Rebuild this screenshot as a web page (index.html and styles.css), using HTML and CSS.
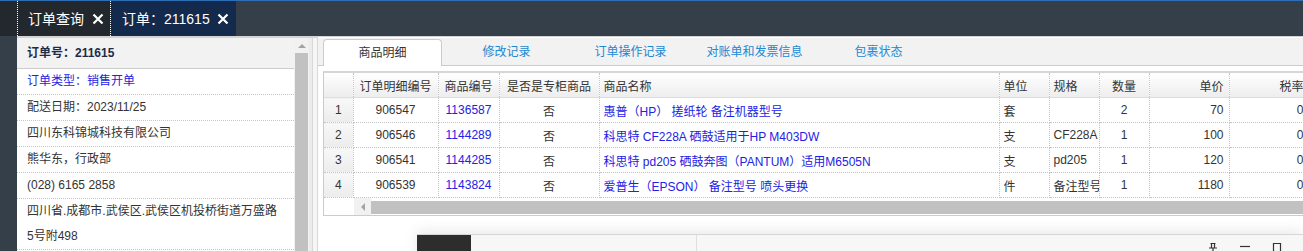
FILE: index.html
```html
<!DOCTYPE html>
<html lang="zh-CN">
<head>
    <meta charset="UTF-8">
    <title>订单：211615</title>
    <link rel="stylesheet" href="styles.css">
</head>
<body>
    <div class="topbar">
        <div class="lead"></div>
        <div class="tab tab-list">
            <span>订单查询</span>
            <svg class="close" width="12" height="12" viewBox="0 0 12 12"><path d="M1.5 1.5L10.5 10.5M10.5 1.5L1.5 10.5"/></svg>
        </div>
        <div class="tab tab-order">
            <span>订单：211615</span>
            <svg class="close" width="12" height="12" viewBox="0 0 12 12"><path d="M1.5 1.5L10.5 10.5M10.5 1.5L1.5 10.5"/></svg>
        </div>
    </div>

    <div class="main">
        <div class="side">
            <div class="side-body">
                <div class="side-head">订单号：211615</div>
                <div class="side-row link">订单类型：销售开单</div>
                <div class="side-row">配送日期：2023/11/25</div>
                <div class="side-row">四川东科锦城科技有限公司</div>
                <div class="side-row">熊华东，行政部</div>
                <div class="side-row">(028) 6165 2858</div>
                <div class="side-row">四川省.成都市.武侯区.武侯区机投桥街道万盛路<br>5号附498</div>
            </div>
            <div class="vscroll">
                <div class="up"></div>
                <div class="vthumb"></div>
            </div>
        </div>
        <div class="gap"></div>

        <div class="content">
            <div class="tabs">
                <div class="ptab active">商品明细</div>
                <div class="ptab">修改记录</div>
                <div class="ptab">订单操作记录</div>
                <div class="ptab">对账单和发票信息</div>
                <div class="ptab">包裹状态</div>
            </div>

            <div class="grid">
                <table>
                    <colgroup>
                        <col style="width:29px">
                        <col style="width:85px">
                        <col style="width:61px">
                        <col style="width:100px">
                        <col style="width:400px">
                        <col style="width:50px">
                        <col style="width:50px">
                        <col style="width:50px">
                        <col style="width:80px">
                        <col style="width:80px">
                    </colgroup>
                    <thead>
                        <tr>
                            <th class="rn"></th>
                            <th>订单明细编号</th>
                            <th>商品编号</th>
                            <th>是否是专柜商品</th>
                            <th class="left">商品名称</th>
                            <th class="left">单位</th>
                            <th class="left">规格</th>
                            <th>数量</th>
                            <th class="right">单价</th>
                            <th class="right">税率</th>
                        </tr>
                    </thead>
                    <tbody>
                        <tr>
                            <td class="rn">1</td>
                            <td>906547</td>
                            <td class="blue">1136587</td>
                            <td>否</td>
                            <td class="left blue">惠普（HP） 搓纸轮 备注机器型号</td>
                            <td class="left">套</td>
                            <td class="left"></td>
                            <td>2</td>
                            <td class="right">70</td>
                            <td class="right">0</td>
                        </tr>
                        <tr>
                            <td class="rn">2</td>
                            <td>906546</td>
                            <td class="blue">1144289</td>
                            <td>否</td>
                            <td class="left blue">科思特 CF228A 硒鼓适用于HP M403DW</td>
                            <td class="left">支</td>
                            <td class="left">CF228A</td>
                            <td>1</td>
                            <td class="right">100</td>
                            <td class="right">0</td>
                        </tr>
                        <tr>
                            <td class="rn">3</td>
                            <td>906541</td>
                            <td class="blue">1144285</td>
                            <td>否</td>
                            <td class="left blue">科思特 pd205 硒鼓奔图（PANTUM）适用M6505N</td>
                            <td class="left">支</td>
                            <td class="left">pd205</td>
                            <td>1</td>
                            <td class="right">120</td>
                            <td class="right">0</td>
                        </tr>
                        <tr>
                            <td class="rn">4</td>
                            <td>906539</td>
                            <td class="blue">1143824</td>
                            <td>否</td>
                            <td class="left blue">爱普生（EPSON） 备注型号 喷头更换</td>
                            <td class="left">件</td>
                            <td class="left">备注型号</td>
                            <td>1</td>
                            <td class="right">1180</td>
                            <td class="right">0</td>
                        </tr>
                    </tbody>
                </table>
                <div class="hscroll">
                    <div class="hs-blank"></div>
                    <div class="hs-arrow"></div>
                    <div class="hs-thumb"></div>
                </div>
            </div>
        </div>
    </div>

    <div class="window">
        <div class="win-dark"></div>
        <div class="win-seg"></div>
        <div class="win-title"></div>
        <div class="win-tools">
            <svg width="12" height="12" viewBox="0 0 12 12"><path d="M3.5 0.5h5M4.5 0.5v4M7.5 0.5v4M2 5h8M6 5v7"/></svg>
            <svg width="12" height="12" viewBox="0 0 12 12"><path d="M1 3.5h10"/></svg>
            <svg width="12" height="12" viewBox="0 0 12 12"><path d="M2.5 0.5h7v11h-7z"/></svg>
        </div>
    </div>
</body>
</html>
```

FILE: styles.css
```css
body {
    margin: 0;
    height: 251px;
    overflow: hidden;
    position: relative;
    background-color: #343f4a;
    font-family: "Liberation Sans", "Noto Sans CJK SC", sans-serif;
    font-size: 12px;
    color: #333;
}
.topbar {
    display: flex;
    height: 35px;
    border-top: 1px solid #2f6fb6;
    background-color: #343f4a;
}
.topbar .lead {
    width: 17px;
    background-color: #23282e;
}
.tab {
    display: flex;
    align-items: center;
    color: #fff;
    font-size: 14px;
    line-height: 16px;
}
.tab-list {
    background-color: #23282e;
    border-left: 1px dotted #fff;
    border-right: 1px dotted #fff;
    padding: 0 6px 0 10px;
    gap: 8px;
}
.tab-order {
    background-color: #142a4c;
    padding: 0 7px 0 11px;
    gap: 7px;
}
.close path {
    stroke: #fff;
    stroke-width: 2.2;
    fill: none;
}
.main {
    display: flex;
    height: 215px;
    margin-left: 17px;
}
.side {
    display: flex;
    width: 292px;
    padding-right: 3px;
    background-color: #ececec;
    border-top: 2px solid #d3d3d3;
    border-right: 1px solid #d8d8d8;
}
.side-body {
    flex: 1;
    background: #fff;
}
.side-head {
    height: 30px;
    line-height: 30px;
    padding-left: 10px;
    background-color: #f2f2f2;
    border-bottom: 1px solid #ccc;
    font-weight: bold;
    color: #1f2b4a;
}
.side-row {
    line-height: 25px;
    padding-left: 10px;
    border-bottom: 1px dotted #c6c6c6;
}
.side-row.link {
    color: #2323e0;
}
.vscroll {
    width: 15px;
    background-color: #f1f1f1;
    display: flex;
    flex-direction: column;
    align-items: center;
}
.up {
    margin-top: 6px;
    width: 0;
    height: 0;
    border-left: 4px solid transparent;
    border-right: 4px solid transparent;
    border-bottom: 4px solid #a3a3a3;
}
.vthumb {
    margin-top: 5px;
    width: 13px;
    flex: 1;
    background-color: #c1c1c1;
}
.gap {
    width: 4px;
    background-color: #f6f6f6;
    border-top: 2px solid #d3d3d3;
}
.content {
    flex: 1;
    min-width: 0;
    overflow: hidden;
    background: #fff;
    border-left: 1px solid #d8d8d8;
    border-top: 1px solid #d3d3d3;
}
.tabs {
    display: flex;
    gap: 5px;
    height: 27px;
    padding: 0 0 0 5px;
    margin-top: 1px;
    background-color: #f2f2f2;
    border-bottom: 1px solid #ccc;
}
.ptab {
    width: 119px;
    flex: none;
    margin-top: 1px;
    text-align: center;
    line-height: 26px;
    color: #2188d2;
}
.ptab.active {
    background: #fff;
    color: #333;
    border: 1px solid #ccc;
    border-bottom: none;
    border-radius: 4px 4px 0 0;
    margin-bottom: -1px;
    height: 27px;
    box-sizing: border-box;
}
.grid {
    margin: 5px 0 0 5px;
    width: 985px;
    border: 1px solid #ccc;
    border-top: 2px solid #d6d6d6;
    border-right: none;
}
table {
    table-layout: fixed;
    border-collapse: collapse;
    width: 985px;
}
th, td {
    height: 24px;
    padding: 0 4px;
    text-align: center;
    font-weight: normal;
    white-space: nowrap;
    overflow: hidden;
    border-right: 1px dotted #c4c4c4;
    border-bottom: 1px dotted #c4c4c4;
}
th {
    height: 24px;
    background: linear-gradient(#fff, #ededed);
    border-bottom: 1px solid #dedede;
}
td.rn {
    background: linear-gradient(#f8f8f8, #ececec);
}
.left {
    text-align: left;
}
.right {
    text-align: right;
    padding-right: 5px;
}
.blue {
    color: #2222e6;
}
.hscroll {
    display: flex;
    height: 17px;
}
.hs-blank {
    width: 30px;
}
.hs-arrow {
    width: 17px;
    background-color: #f1f1f1;
    display: flex;
    align-items: center;
    justify-content: center;
}
.hs-arrow::before {
    content: "";
    border-top: 4px solid transparent;
    border-bottom: 4px solid transparent;
    border-right: 4px solid #a3a3a3;
}
.hs-thumb {
    flex: 1;
    margin: 3px 0 1px;
    background-color: #c1c1c1;
}
.window {
    position: absolute;
    left: 417px;
    top: 234px;
    right: 0;
    height: 40px;
    display: flex;
    background-color: #f7f7f7;
    border-top: 1px solid #d6d6d6;
    box-shadow: 0 -3px 14px rgba(0,0,0,0.09);
}
.win-dark {
    width: 54px;
    background-color: #2d2d2d;
}
.win-seg {
    width: 225px;
    border-right: 1px solid #e0e0e0;
}
.win-title {
    flex: 1;
}
.win-tools {
    display: flex;
    gap: 20px;
    padding: 8px 20px 0 0;
}
.win-tools path {
    stroke: #333;
    stroke-width: 1.2;
    fill: none;
}
```
